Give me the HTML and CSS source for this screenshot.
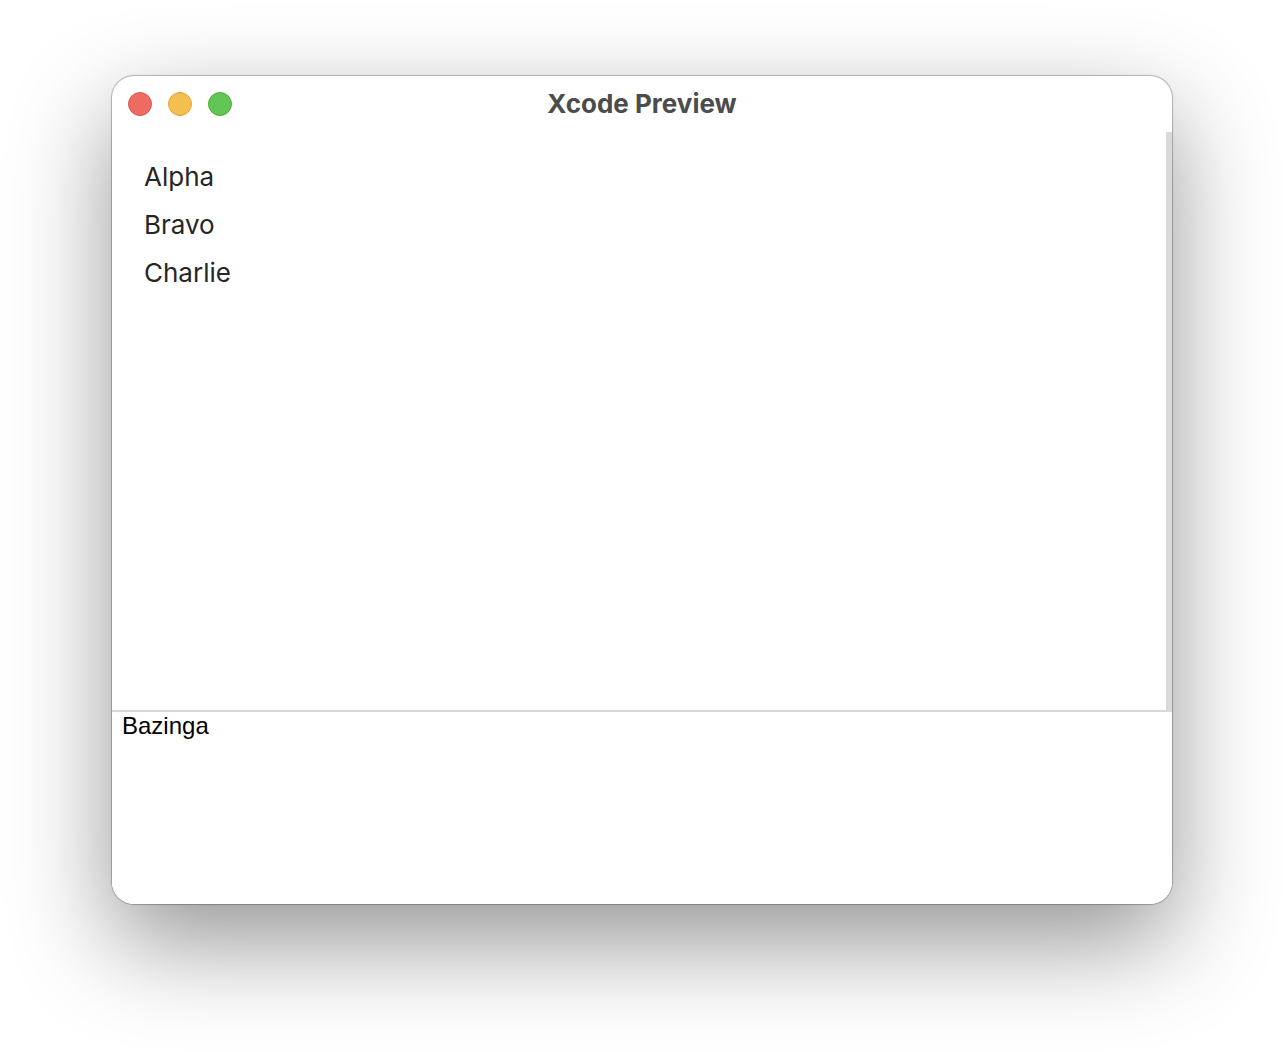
FILE: index.html
```
<!DOCTYPE html>
<html lang="en">
  <head>
    <meta charset="UTF-8">
    <title>Xcode Preview</title>
    <meta name="viewport" content="width=device-width, initial-scale=1.0">
    <link rel="stylesheet" href="styles.css">
  </head>
  <body>
    <main class="window">
      <header class="titlebar">
        <div class="controls">
          <button type="button" class="control close" aria-label="Close"></button>
          <button type="button" class="control minimize" aria-label="Minimize"></button>
          <button type="button" class="control zoom" aria-label="Zoom"></button>
        </div>
        <h1 class="title">Xcode Preview</h1>
      </header>
      <div class="list-pane">
        <ul class="list">
          <li>Alpha</li>
          <li>Bravo</li>
          <li>Charlie</li>
        </ul>
      </div>
      <textarea class="editor" aria-label="Text editor" spellcheck="false">Bazinga</textarea>
    </main>
  </body>
</html>
```

FILE: styles.css
```
* {
    box-sizing: border-box;
}

body {
    display: flex;
    min-height: 100vh;
    margin: 0;
    padding: 76px 112px 148px;
    background-color: #fff;
    font-family: Inter, "Liberation Sans", sans-serif;
}

.window {
    flex: 1;
    display: flex;
    flex-direction: column;
    overflow: hidden;
    border-radius: 22px;
    background-color: #fff;
    box-shadow: 0 0 1px 1px rgba(0, 0, 0, 0.26), 0 38px 100px rgba(0, 0, 0, 0.42);
}

.titlebar {
    display: grid;
    grid-template-columns: 1fr auto 1fr;
    align-items: center;
    height: 56px;
    padding: 0 16px;
}

.controls {
    display: flex;
    gap: 16px;
}

.control {
    width: 24px;
    height: 24px;
    padding: 0;
    border: 1px solid;
    border-radius: 50%;
}

.close {
    border-color: #d65b4f;
    background-color: #ed6b60;
}

.minimize {
    border-color: #d9a341;
    background-color: #f5bf50;
}

.zoom {
    border-color: #52a93f;
    background-color: #62c655;
}

.title {
    margin: 0;
    color: #4c4c4c;
    font-size: 26px;
    font-weight: 700;
    line-height: 32px;
}

.list-pane {
    flex: 3;
    border-right: 6px solid #d9d9d9;
    border-bottom: 2px solid #d9d9d9;
}

.list {
    margin: 0;
    padding: 21px 32px;
    color: #262626;
    font-size: 26px;
    line-height: 48px;
    list-style: none;
}

.editor {
    flex: 1;
    display: block;
    width: 100%;
    padding: 0 10px;
    border: none;
    outline: none;
    background-color: #fff;
    color: #000;
    font-family: "Liberation Sans", sans-serif;
    font-size: 24px;
    line-height: 28px;
    resize: none;
}
```
